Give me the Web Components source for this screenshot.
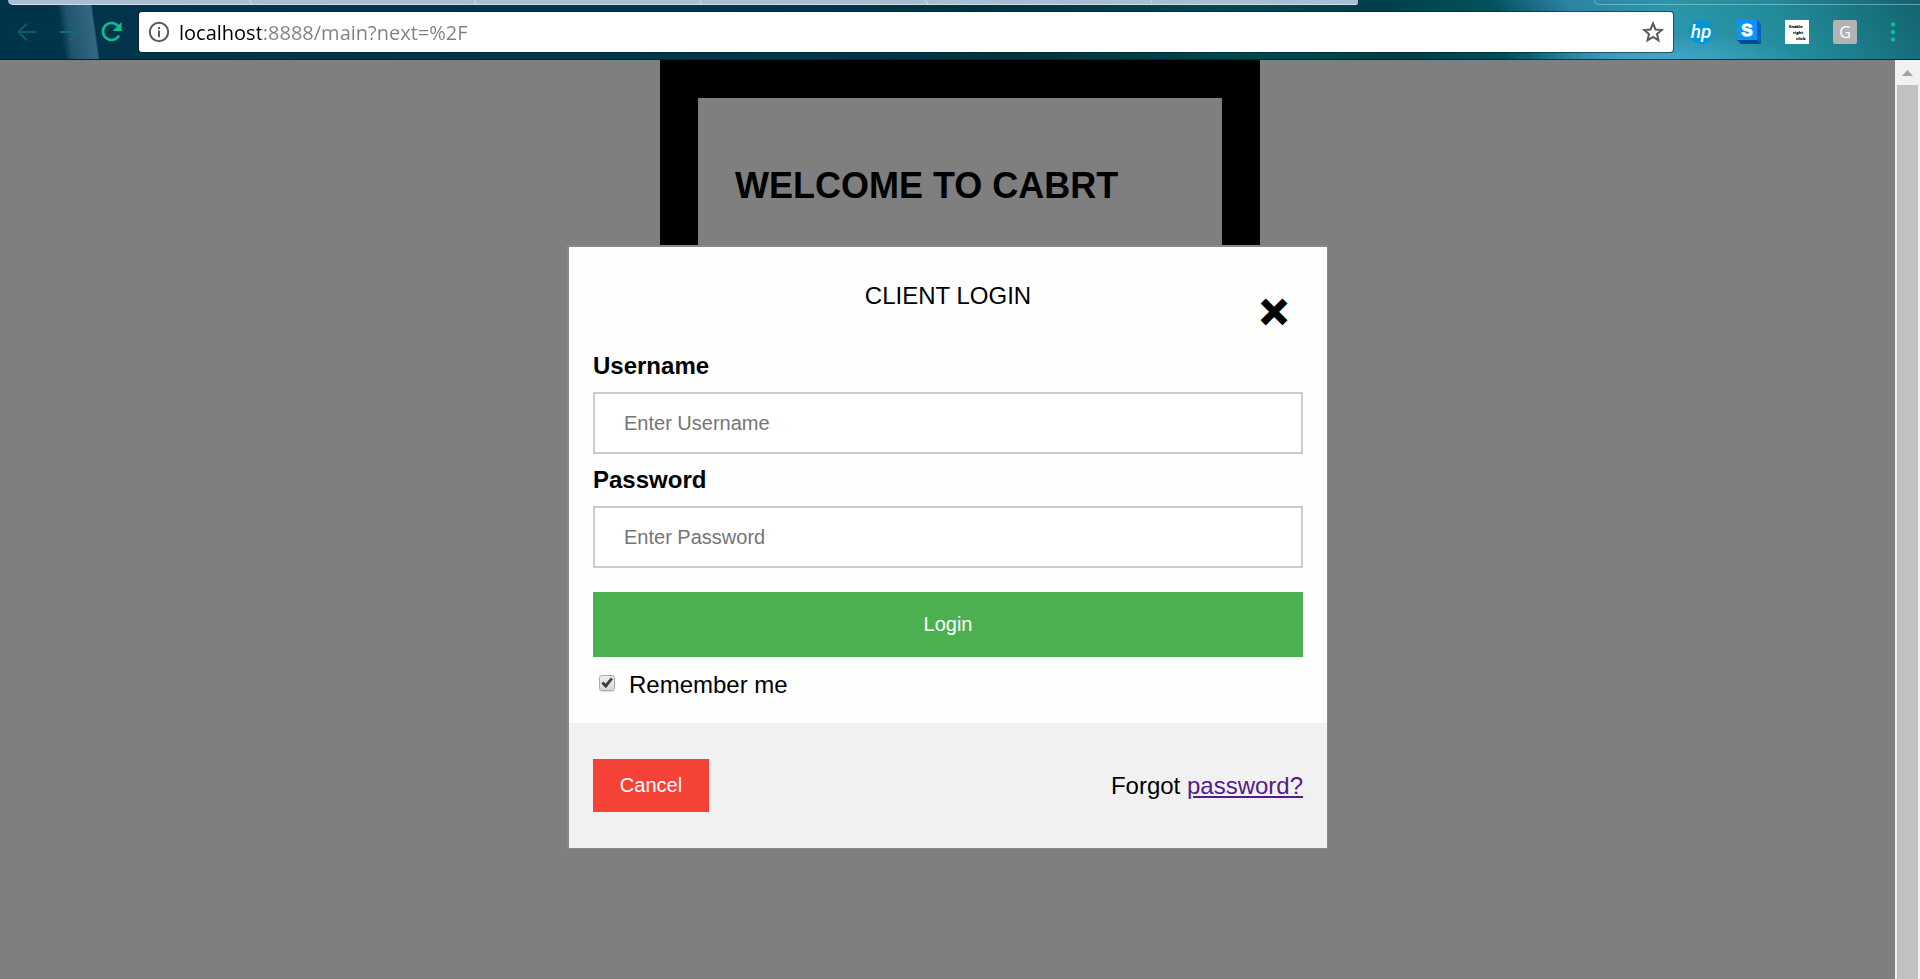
<!DOCTYPE html>
<html lang="en">
<head>
<meta charset="utf-8">
<title>CABRT – Client Login</title>
<style>
  html { height: 100%; }
  body { margin: 0; min-height: 100%; display: flex; flex-direction: column; background: #fff; font-family: "Liberation Sans", Arial, sans-serif; color: #000; }
  browser-bar { flex: none; }
  page-view { flex: 1; }
</style>
</head>
<body>
<browser-bar></browser-bar>
<page-view>
  <welcome-panel>WELCOME TO CABRT</welcome-panel>
  <login-modal slot="overlay" heading="CLIENT LOGIN"></login-modal>
</page-view>

<template id="browser-bar">
  <style>
    :host {
      display: flex; flex-direction: column; height: 60px; box-sizing: border-box;
      border-bottom: 1px solid rgba(0, 28, 40, .7);
      background:
        linear-gradient(82deg, transparent 64px, rgba(80, 130, 160, .4) 72px, rgba(80, 130, 160, .65) 97px, transparent 99px) 0 0 / 110px 100% no-repeat,
        radial-gradient(ellipse 150px 26px at 86% 100%, rgba(80, 175, 220, .7), transparent),
        linear-gradient(55deg, #01344a 0, #01374d 40%, #003341 52%, #004751 64%, #003f49 72%, #02525c 78%, #2d83a5 82%, #2b95aa 87%, #238c9b 92%, #12636f 100%);
    }
    .tabs { display: flex; justify-content: space-between; height: 5px; }
    .open { display: flex; width: calc(71% - 13px); box-sizing: border-box; margin-left: 8px; background: #a6bfd5; border-bottom: 1px solid #d0dde8; border-radius: 0 0 4px 8px; overflow: hidden; }
    .open i { flex: 25; border-right: 1px solid #d0dde8; transform: skewX(25deg); }
    .open i:first-child { flex: 27; }
    .open i:last-child { flex: 23; border: 0; }
    .rest { width: 17%; box-sizing: border-box; border: solid rgba(170, 220, 230, .5); border-width: 0 0 1px 1px; border-radius: 0 0 0 5px; }
    .row { flex: 1; display: flex; align-items: center; padding: 0 15px 0 16px; }
    button { display: block; padding: 0; border: 0; background: none; line-height: 0; }
    nav { display: flex; gap: 18px; width: 123px; }
    svg { display: block; }
    .exts { display: flex; align-items: center; gap: 24px; margin-left: 16px; }
    address-box { flex: 1; }
  </style>
  <div class="tabs"><div class="open"><i></i><i></i><i></i><i></i><i></i><i></i></div><div class="rest"></div></div>
  <div class="row">
    <nav aria-label="History">
      <button aria-label="Back"><svg width="24" height="24" viewBox="0 0 24 24" fill="none" stroke="#075f68" stroke-width="2"><path d="M20 12H3M11 3.500l-8.500 8.500 8.500 8.500"/></svg></button>
      <button aria-label="Forward"><svg width="24" height="24" viewBox="0 0 24 24" fill="none" stroke="#146a74" stroke-width="2"><path d="M2 12h17M11 3.500l8.500 8.500-8.500 8.500"/></svg></button>
      <button aria-label="Reload"><svg width="24" height="24" viewBox="0 0 24 24"><path d="M19 15.500A8.500 8.500 0 1 1 18 6" fill="none" stroke="#0abf8e" stroke-width="2.600"/><path d="M21.500 2v9h-9z" fill="#0abf8e"/></svg></button>
    </nav>
    <address-box></address-box>
    <div class="exts">
      <button aria-label="HP"><svg width="24" height="24" viewBox="0 0 24 24"><circle cx="12" cy="12" r="12" fill="#0096d6"/><text x="12" y="18" text-anchor="middle" font-family="Roboto, sans-serif" font-style="italic" font-weight="500" font-size="19" fill="#fff">hp</text></svg></button>
      <button aria-label="S"><svg width="24" height="24" viewBox="0 0 24 24"><path d="M20 0l4 4v20H4l-4-4z" fill="#024a8e"/><path d="M20 0l4 4v20l-4-4z" fill="#0561b5"/><path d="M0 0h20v20H0z" fill="#0795ff"/><text x="10" y="16" text-anchor="middle" font-family="Liberation Sans, sans-serif" font-weight="bold" font-size="17" fill="#fff" stroke="#fff">S</text></svg></button>
      <button aria-label="Enable right click"><svg width="24" height="24" viewBox="0 0 24 24" font-family="Open Sans, sans-serif" font-weight="800" font-size="4"><path d="M0 0h24v24H0z" fill="#fff"/><text x="4" y="8">Enable</text><text x="8" y="14">right</text><text x="11" y="20">click</text></svg></button>
      <button aria-label="G"><svg width="24" height="24" viewBox="0 0 24 24"><rect width="24" height="24" rx="2" fill="#b3b3b3"/><text x="12" y="18" text-anchor="middle" font-family="Open Sans, sans-serif" font-size="16" fill="#fff">G</text></svg></button>
      <button aria-label="Menu"><svg width="24" height="24" viewBox="0 0 24 24" fill="#0abf8e"><circle cx="12" cy="4.500" r="2.200"/><circle cx="12" cy="12" r="2.200"/><circle cx="12" cy="19.500" r="2.200"/></svg></button>
    </div>
  </div>
</template>

<template id="address-box">
  <style>
    :host { display: flex; align-items: center; height: 40px; padding: 0 9px; background: #fff; border-radius: 3px; box-shadow: 0 0 0 1px rgba(0, 30, 40, .55); }
    svg { display: block; }
    button { padding: 0; border: 0; background: none; }
    input {
      flex: 1; min-width: 0; height: 32px; margin: 0; padding: 0 0 0 9px; border: 0; outline: 0;
      font: 20px "Open Sans", "Noto Sans", sans-serif; color: transparent;
      background: linear-gradient(90deg, #000 91px, #808080 91px); -webkit-background-clip: text; background-clip: text;
    }
  </style>
  <svg width="22" height="22" viewBox="0 0 22 22"><circle cx="11" cy="11" r="9.200" fill="none" stroke="#5a5a5a" stroke-width="2"/><path d="M10 9.500h2V16h-2zM10 6h2v2h-2z" fill="#5a5a5a"/></svg>
  <input type="text" aria-label="Address" value="localhost:8888/main?next=%2F" spellcheck="false">
  <button aria-label="Bookmark"><svg width="22" height="22" viewBox="0 0 22 22"><path d="M11 2.500l2.500 6 6.300.500-4.800 4.100 1.500 6.300-5.500-3.400-5.500 3.400L7 13.100 2.200 9l6.300-.500z" fill="none" stroke="#5a5a5a" stroke-width="2"/></svg></button>
</template>

<template id="page-view">
  <style>
    :host { display: flex; }
    main { flex: 1; position: relative; overflow: hidden; padding-left: 25px; }
    aside { width: 25px; box-sizing: border-box; padding: 0 2px; background: #f1f1f1; display: flex; flex-direction: column; }
    aside svg { display: block; height: 25px; }
    .thumb { flex: 1; background: #c1c1c1; }
  </style>
  <main><slot></slot><slot name="overlay"></slot></main>
  <aside aria-hidden="true"><svg width="21" height="25" viewBox="0 0 21 25"><path d="M10.500 10l5.500 6H5z" fill="#a3a3a3"/></svg><div class="thumb"></div></aside>
</template>

<template id="welcome-panel">
  <style>
    :host { display: block; box-sizing: border-box; width: 600px; min-height: 600px; margin: 0 auto; border: 38px solid #000; padding: 64px 37px; }
    h1 { margin: 0; font-size: 36px; line-height: 48px; white-space: nowrap; }
  </style>
  <h1><slot></slot></h1>
</template>

<template id="text-field">
  <style>
    :host { display: flex; flex-direction: column; gap: 12px; }
    label { font-weight: bold; font-size: 24px; line-height: 28px; }
    input { width: 100%; height: 62px; box-sizing: border-box; margin: 0; padding: 0 29px; border: 2px solid #ccc; border-radius: 0; background: #fff; font: 20px "Liberation Sans", Arial, sans-serif; }
    input::placeholder { color: #757575; }
  </style>
  <label for="field"></label>
  <input id="field">
</template>

<template id="login-modal">
  <style>
    :host { position: absolute; inset: 0; padding-top: 185px; background: rgba(0, 0, 0, .5); font-size: 24px; line-height: 28px; }
    form { width: 40%; margin: 0 auto; border: solid #888; border-width: 2px 1px 1px 2px; background: #fefefe; }
    header { position: relative; padding: 35px 0 18px; text-align: center; }
    h2 { margin: 0; font-size: 24px; font-weight: normal; }
    button { border: 0; padding: 0; color: #fff; font: 20px "Liberation Sans", Arial, sans-serif; cursor: pointer; }
    .close { position: absolute; right: 39px; top: 41px; color: #000; background: none; font-size: 48px; font-weight: bold; line-height: 48px; -webkit-text-stroke: 2px #000; }
    .body { display: flex; flex-direction: column; gap: 12px; padding: 24px; }
    .login { height: 65px; margin-top: 12px; background: #4caf50; }
    .remember { display: flex; align-items: center; gap: 14px; padding-left: 6px; margin-top: 2px; }
    .remember input { appearance: none; width: 16px; height: 16px; margin: 0 0 4px; border: 1px solid #aaa; border-radius: 3px; background: linear-gradient(#eee, #d8d8d8); box-shadow: 0 1px 1px #ddd; display: grid; place-items: center; }
    .remember input:checked::before { content: ""; width: 14px; height: 14px; background: #3d3d3d; clip-path: polygon(10% 54%, 24% 40%, 40% 56%, 78% 10%, 92% 24%, 42% 88%); }
    footer { display: flex; align-items: center; justify-content: space-between; padding: 36px 24px; background: #f1f1f1; }
    .cancel { width: 116px; height: 53px; background: #f44336; }
    a { color: #551a8b; }
  </style>
  <form role="dialog" aria-labelledby="heading">
    <header>
      <h2 id="heading"></h2>
      <button class="close" type="button" title="Close">×</button>
    </header>
    <div class="body">
      <text-field label="Username" placeholder="Enter Username"></text-field>
      <text-field label="Password" placeholder="Enter Password" type="password"></text-field>
      <button class="login" type="button">Login</button>
      <div class="remember"><input id="remember" type="checkbox" checked><label for="remember">Remember me</label></div>
    </div>
    <footer>
      <button class="cancel" type="button">Cancel</button>
      <span>Forgot <a href="#">password?</a></span>
    </footer>
  </form>
</template>

<script>
  class TemplateElement extends HTMLElement {
    constructor() {
      super();
      this.attachShadow({ mode: "open" })
        .append(document.getElementById(this.localName).content.cloneNode(true));
    }
  }
  class TextField extends TemplateElement {
    connectedCallback() {
      const input = this.shadowRoot.querySelector("input");
      this.shadowRoot.querySelector("label").textContent = this.getAttribute("label");
      input.placeholder = this.getAttribute("placeholder");
      input.type = this.getAttribute("type") || "text";
    }
  }
  class LoginModal extends TemplateElement {
    connectedCallback() {
      const root = this.shadowRoot;
      root.querySelector("h2").textContent = this.getAttribute("heading");
      const hide = () => { this.hidden = true; this.style.display = "none"; };
      root.querySelector(".close").addEventListener("click", hide);
      root.querySelector(".cancel").addEventListener("click", hide);
    }
  }
  customElements.define("address-box", class extends TemplateElement {});
  customElements.define("browser-bar", class extends TemplateElement {});
  customElements.define("page-view", class extends TemplateElement {});
  customElements.define("welcome-panel", class extends TemplateElement {});
  customElements.define("text-field", TextField);
  customElements.define("login-modal", LoginModal);
</script>
</body>
</html>
